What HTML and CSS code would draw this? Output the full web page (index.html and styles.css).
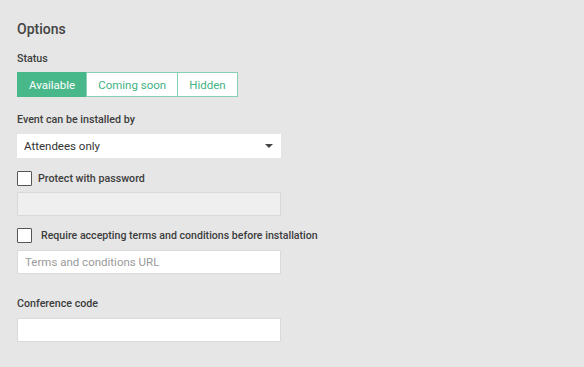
FILE: index.html
```html
<!DOCTYPE html>
<html lang="en">
<head>
  <meta charset="UTF-8">
  <title>Options</title>
  <link rel="stylesheet" href="styles.css">
</head>
<body>

<div class="options">
  <h2 class="title">Options</h2>

  <div class="field-label">Status</div>
  <div class="status-group">
    <button class="status-btn active">Available</button>
    <button class="status-btn">Coming soon</button>
    <button class="status-btn">Hidden</button>
  </div>

  <div class="field-label installed-label">Event can be installed by</div>
  <div class="select">
    <span>Attendees only</span>
    <span class="caret"></span>
  </div>

  <label class="check-row first-check">
    <span class="checkbox"></span>
    <span class="check-text">Protect with password</span>
  </label>
  <input class="text-input disabled" type="text" disabled>

  <label class="check-row second-check">
    <span class="checkbox"></span>
    <span class="check-text wide">Require accepting terms and conditions before installation</span>
  </label>
  <input class="text-input terms-input" type="text" placeholder="Terms and conditions URL">

  <div class="field-label code-label">Conference code</div>
  <input class="text-input" type="text">
</div>

</body>
</html>
```

FILE: styles.css
```css
body {
  margin: 0;
  padding: 0;
  background-color: #e6e6e6;
  font-family: Roboto, "Liberation Sans", sans-serif;
  color: #3d3d3d;
}

.options {
  padding: 21px 17px 0 17px;
}

.title {
  margin: 0;
  font-size: 14px;
  line-height: 16px;
  font-weight: 500;
  color: #444;
}

.field-label {
  margin-top: 15px;
  font-size: 10.7px;
  line-height: 14px;
  font-weight: 500;
  color: #3d3d3d;
}

.status-group {
  display: flex;
  margin-top: 6px;
}

.status-btn {
  height: 25px;
  padding: 0 11px;
  font-family: Roboto, "Liberation Sans", sans-serif;
  font-size: 11.5px;
  color: #3fb383;
  background-color: #fff;
  border: 1px solid #86d1b1;
  margin-left: -1px;
  cursor: pointer;
}

.status-btn:first-child {
  margin-left: 0;
}

.status-btn.active {
  background-color: #48b78a;
  border-color: #48b78a;
  color: #fff;
}

.installed-label {
  margin-top: 16px;
}

.select {
  display: flex;
  align-items: center;
  justify-content: space-between;
  box-sizing: border-box;
  width: 264px;
  height: 24px;
  margin-top: 7px;
  padding: 0 8px 0 7px;
  background-color: #fff;
  font-size: 11.5px;
  color: #333;
}

.caret {
  width: 0;
  height: 0;
  border-left: 4px solid transparent;
  border-right: 4px solid transparent;
  border-top: 4px solid #444;
}

.check-row {
  display: flex;
  align-items: center;
  gap: 6px;
  height: 15px;
}

.first-check {
  margin-top: 13px;
}

.second-check {
  margin-top: 12px;
}

.checkbox {
  box-sizing: border-box;
  width: 15px;
  height: 15px;
  border: 1.5px solid #555;
  background-color: #fff;
  border-radius: 1px;
}

.check-text {
  font-size: 10.7px;
  line-height: 14px;
  font-weight: 500;
  color: #3d3d3d;
}

.check-text.wide {
  margin-left: 3px;
  font-size: 10.6px;
}

.text-input {
  display: block;
  box-sizing: border-box;
  width: 264px;
  height: 24px;
  margin-top: 6px;
  padding: 0 7px;
  background-color: #fff;
  border: 1px solid #dadada;
  font-family: Roboto, "Liberation Sans", sans-serif;
  font-size: 11.5px;
  color: #333;
  outline: none;
}

.text-input::placeholder {
  color: #9a9a9a;
}

.text-input.disabled {
  background-color: #efefef;
  border-color: #d9d9d9;
}

.terms-input {
  margin-top: 7px;
}

.code-label {
  margin-top: 23px;
}

.code-label + .text-input {
  margin-top: 7px;
}
```
